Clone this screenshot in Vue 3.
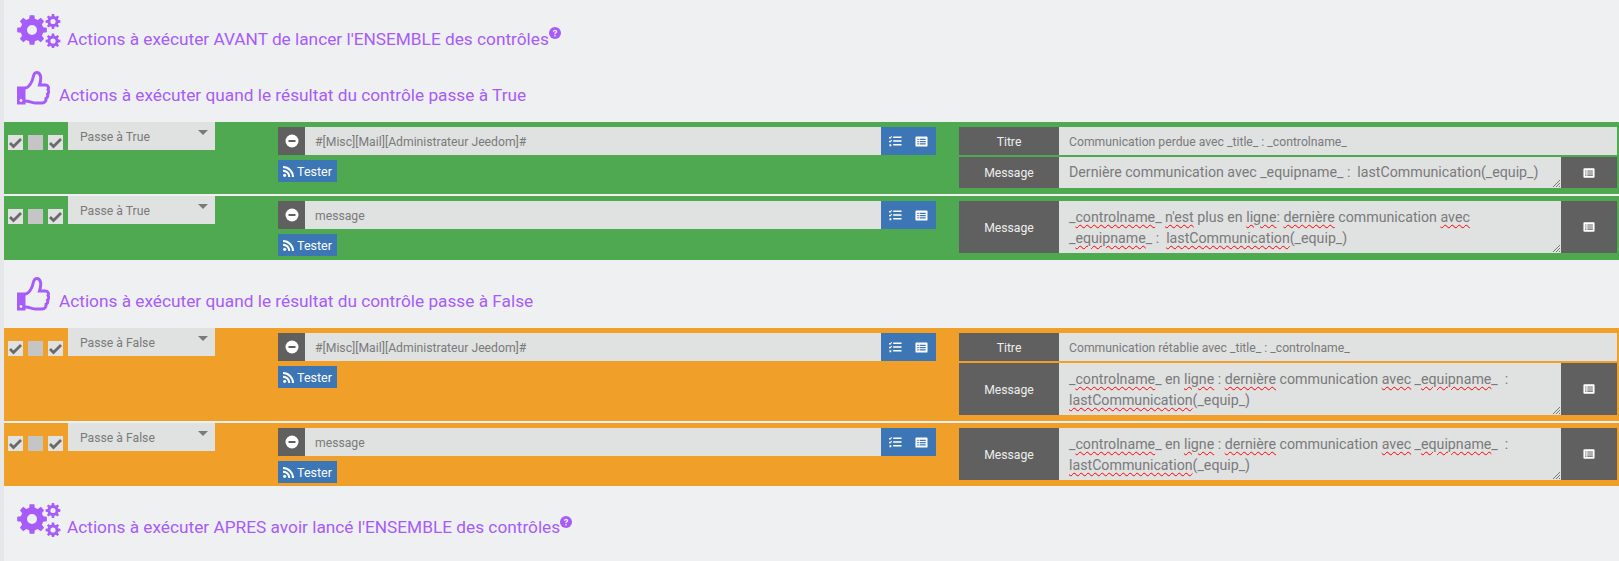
<template>
  <div class="page">
    <h4 class="heading gears">
      <svg class="ico-cogs" viewBox="0 0 44 34"><path :d="cogs" fill-rule="evenodd" /></svg>
      <span class="title">Actions à exécuter AVANT de lancer l'ENSEMBLE des contrôles</span>
      <svg class="ico-help" viewBox="0 0 12 12"><circle cx="6" cy="6" r="6" /><path d="M3.9 4.7C4 3.4 4.9 2.7 6.1 2.7c1.2 0 2.1.7 2.1 1.8 0 1.6-1.6 1.4-1.6 2.7H5.3c0-1.9 1.5-1.8 1.5-2.6 0-.4-.3-.7-.8-.7s-.8.3-.8.8zM5.3 8h1.3v1.4H5.3z" fill="#eff0f2" /></svg>
    </h4>

    <template v-for="group in groups" :key="group.label">
      <h4 class="heading thumb" :class="{ 'thumb-false': group.cls === 'orange' }">
        <svg class="ico-thumb" viewBox="0 0 33 35">
          <path d="M0 15.5h8.5v18H0z" />
          <path d="M8 17c2 0 5-2.5 7-7 1.5-3 1-8.500 4.500-8.500 4 0 5.500 4.500 3 12.500h6c3 0 3.500 3 2.500 4.500 1 1.500.8 3.500-.5 4.500.6 1.800 0 3.500-1.500 4.300.3 2.700-1 4.700-4 4.700h-6c-4 0-6-2-11-2" fill="none" stroke="#a65cff" stroke-width="3" />
          <circle cx="4" cy="29.500" r="1.400" fill="#eff0f2" />
        </svg>
        <span class="title">{{ group.label }}</span>
      </h4>

      <div v-for="(row, i) in group.rows" :key="i" class="row" :class="[group.cls, row.size]">
        <div class="checks">
          <span class="check"><svg viewBox="0 0 15 15"><path d="M2 8l3.500 3.500L13 4" /></svg></span>
          <span class="check off"></span>
          <span class="check"><svg viewBox="0 0 15 15"><path d="M2 8l3.500 3.500L13 4" /></svg></span>
        </div>
        <div class="select">{{ group.select }}<i class="caret"></i></div>

        <div class="cmd">
          <div class="input-group">
            <span class="minus"><svg viewBox="0 0 14 14"><circle cx="7" cy="7" r="6.500" fill="#fff" /><rect x="3.500" y="6" width="7" height="2" fill="#606060" /></svg></span>
            <span class="cmd-input">{{ row.cmd }}</span>
            <span class="blue-btns">
              <svg viewBox="0 0 14 14" class="ico-tasks"><path d="M0 2.500l1 1 2-2M0 6.500l1 1 2-2" fill="none" stroke="#fff" stroke-width="1.100" /><path d="M0.500 10h2v2h-2zM4.500 1.700h9v1.600h-9zM4.500 5.700h9v1.600h-9zM4.500 9.700h9v1.600h-9z" fill="#fff" /></svg>
              <svg viewBox="0 0 14 14" class="ico-list"><path d="M1.500 1.500h11a1 1 0 0 1 1 1v9a1 1 0 0 1-1 1h-11a1 1 0 0 1-1-1v-9a1 1 0 0 1 1-1z" fill="#fff" /><path d="M2.500 4h1.500v1.300H2.500zM5 4h6.500v1.300H5zM2.500 6.400h1.500v1.300H2.500zM5 6.400h6.500v1.300H5zM2.500 8.800h1.500v1.300H2.500zM5 8.800h6.500v1.300H5z" fill="#3c76b4" /></svg>
            </span>
          </div>
          <span class="tester">
            <svg viewBox="0 0 12 12"><circle cx="1.800" cy="10.200" r="1.700" /><path d="M0 4v2.200A5.800 5.800 0 0 1 5.800 12H8A8 8 0 0 0 0 4z" /><path d="M0 0v2.200A9.800 9.800 0 0 1 9.800 12H12A12 12 0 0 0 0 0z" /></svg>
            Tester
          </span>
        </div>

        <div class="options">
          <div v-if="row.titre" class="opt titre">
            <span class="opt-label">Titre</span>
            <span class="titre-text">{{ row.titre }}</span>
          </div>
          <div class="opt message">
            <span class="opt-label">Message</span>
            <div class="area" :class="{ 'area-large': row.large }">
              <div class="area-text"><template v-for="(part, k) in row.message" :key="k"><span v-if="part.bad" class="bad">{{ part.bad }}</span><template v-else>{{ part }}</template></template></div>
              <svg class="grip" viewBox="0 0 7 7"><path d="M0 7L7 0M3 7l4-4M6 7l1-1" stroke="#777" stroke-width="1" /></svg>
            </div>
            <span class="msg-btn"><svg viewBox="0 0 14 14"><path d="M1.500 1.500h11a1 1 0 0 1 1 1v9a1 1 0 0 1-1 1h-11a1 1 0 0 1-1-1v-9a1 1 0 0 1 1-1z" fill="#fff" /><path d="M2.500 4h1.500v1.300H2.500zM5 4h6.500v1.300H5zM2.500 6.400h1.500v1.300H2.500zM5 6.400h6.500v1.300H5zM2.500 8.800h1.500v1.300H2.500zM5 8.800h6.500v1.300H5z" fill="#606060" /></svg></span>
          </div>
        </div>
      </div>
    </template>

    <h4 class="heading gears last">
      <svg class="ico-cogs" viewBox="0 0 44 34"><path :d="cogs" fill-rule="evenodd" /></svg>
      <span class="title">Actions à exécuter APRES avoir lancé l'ENSEMBLE des contrôles</span>
      <svg class="ico-help" viewBox="0 0 12 12"><circle cx="6" cy="6" r="6" /><path d="M3.9 4.7C4 3.4 4.9 2.7 6.1 2.7c1.2 0 2.1.7 2.1 1.8 0 1.6-1.6 1.4-1.6 2.7H5.3c0-1.9 1.5-1.8 1.5-2.6 0-.4-.3-.7-.8-.7s-.8.3-.8.8zM5.3 8h1.3v1.4H5.3z" fill="#eff0f2" /></svg>
    </h4>
  </div>
</template>

<script setup>
// gear outline, drawn from its tooth count
const gear = (cx, cy, outer, root, hole, teeth) => {
  const step = (Math.PI * 2) / teeth;
  let d = '';
  for (let t = 0; t < teeth; t++) {
    const a = t * step - Math.PI / 2;
    const pts = [
      [root, a - step * 0.32],
      [outer, a - step * 0.2],
      [outer, a + step * 0.2],
      [root, a + step * 0.32],
    ];
    pts.forEach(([r, ang], idx) => {
      d += `${t === 0 && idx === 0 ? 'M' : 'L'}${(cx + r * Math.cos(ang)).toFixed(2)} ${(cy + r * Math.sin(ang)).toFixed(2)}`;
    });
  }
  d += 'Z';
  d += `M${cx + hole} ${cy}a${hole} ${hole} 0 1 0 ${-hole * 2} 0a${hole} ${hole} 0 1 0 ${hole * 2} 0Z`;
  return d;
};

const cogs = gear(15, 16, 15, 11.5, 5, 8) + gear(36, 7.5, 7.5, 5.6, 2.6, 8) + gear(36, 27, 7.5, 5.6, 2.6, 8);

const lineOne = ['_', { bad: 'controlname' }, '_ en ', { bad: 'ligne' }, ' : ', { bad: 'dernière' }, ' communication ', { bad: 'avec' }, ' _', { bad: 'equipname' }, '_  : ', { bad: 'lastCommunication' }, '(_equip_)'];

const groups = [
  {
    label: 'Actions à exécuter quand le résultat du contrôle passe à True',
    cls: 'green',
    select: 'Passe à True',
    rows: [
      {
        size: 'first',
        cmd: '#[Misc][Mail][Administrateur Jeedom]#',
        titre: 'Communication perdue avec _title_ : _controlname_',
        message: ['Dernière communication avec _equipname_ :  lastCommunication(_equip_)'],
      },
      {
        size: 'second',
        cmd: 'message',
        large: true,
        message: ['_', { bad: 'controlname' }, '_ ', { bad: "n'est" }, ' plus en ', { bad: 'ligne' }, ': ', { bad: 'dernière' }, ' communication ', { bad: 'avec' }, ' _', { bad: 'equipname' }, '_ :  ', { bad: 'lastCommunication' }, '(_equip_)'],
      },
    ],
  },
  {
    label: 'Actions à exécuter quand le résultat du contrôle passe à False',
    cls: 'orange',
    select: 'Passe à False',
    rows: [
      {
        size: 'first',
        cmd: '#[Misc][Mail][Administrateur Jeedom]#',
        titre: 'Communication rétablie avec _title_ : _controlname_',
        large: true,
        message: lineOne,
      },
      { size: 'second', cmd: 'message', large: true, message: lineOne },
    ],
  },
];
</script>

<style>
html,
body {
  margin: 0;
  background: #eff0f2;
}
</style>

<style scoped>
.page {
  height: 561px;
  overflow: hidden;
  box-sizing: border-box;
  border-left: 4px solid #e6e7e9;
  padding-top: 15px;
  font-family: Roboto, "Liberation Sans", sans-serif;
  color: #7a7a7a;
}

.heading {
  margin: 0;
  display: flex;
  align-items: flex-end;
  font-weight: 400;
  font-size: 17.25px;
  line-height: 20px;
  color: #a65cff;
}

.gears {
  padding-left: 13px;
  height: 33px;
}

.gears .title {
  padding-bottom: 0;
  margin-bottom: -1px;
}

.ico-cogs {
  width: 44px;
  height: 34px;
  fill: #a65cff;
  margin-right: 6px;
  flex: none;
}

.ico-help {
  width: 12px;
  height: 12px;
  fill: #a65cff;
  margin-bottom: 9px;
  flex: none;
}

.thumb {
  margin-top: 24px;
  padding-left: 13px;
  height: 34px;
  margin-bottom: 16px;
}

.thumb-false {
  margin-top: 18px;
}

.ico-thumb {
  width: 33px;
  height: 35px;
  fill: #a65cff;
  margin-right: 9px;
  flex: none;
}

.title {
  padding-bottom: 1px;
}

.row {
  display: flex;
  align-items: flex-start;
  margin-bottom: 2px;
  height: 64px;
  font-size: 12.2px;
}

.row.first {
  height: 72px;
}

.green {
  background: #4fa950;
}

.orange {
  background: #f09f28;
}

.orange.first {
  height: 93px;
}

.orange.second {
  height: 63px;
}

.checks {
  display: flex;
  gap: 5px;
  width: 60px;
  padding: 13px 0 0 4px;
  box-sizing: content-box;
  flex: none;
}

.check {
  width: 15px;
  height: 15px;
  background: #e0e1e1;
  display: block;
}

.check svg {
  display: block;
  fill: none;
  stroke: #6a6a6a;
  stroke-width: 2.800;
}

.check.off {
  background: #c5c5c5;
}

.select {
  position: relative;
  width: 147px;
  height: 28px;
  margin-left: 0;
  background: #e0e1e1;
  padding-left: 12px;
  box-sizing: border-box;
  line-height: 30px;
  flex: none;
}

.caret {
  position: absolute;
  right: 7px;
  top: 8px;
  border-left: 5px solid transparent;
  border-right: 5px solid transparent;
  border-top: 5px solid #7a7a7a;
}

.cmd {
  width: 658px;
  margin: 5px 0 0 63px;
  flex: none;
}

.input-group {
  display: flex;
  height: 28px;
}

.minus {
  width: 27px;
  background: #606060;
  display: flex;
  align-items: center;
  justify-content: center;
  flex: none;
}

.minus svg {
  width: 14px;
  height: 14px;
}

.cmd-input {
  flex: 1;
  background: #e0e1e1;
  padding-left: 10px;
  line-height: 30px;
}

.blue-btns {
  width: 55px;
  background: #3c76b4;
  display: flex;
  align-items: center;
  justify-content: space-between;
  padding: 0 8px 0 8px;
  box-sizing: border-box;
  flex: none;
}

.blue-btns svg {
  width: 13px;
  height: 13px;
}

.tester {
  margin-top: 5px;
  width: 59px;
  height: 22px;
  background: #3c76b4;
  color: #fff;
  display: flex;
  align-items: center;
  justify-content: center;
  gap: 3px;
  font-size: 12.5px;
}

.tester svg {
  width: 11px;
  height: 11px;
  fill: #fff;
}

.options {
  flex: 1;
  margin: 5px 2px 0 23px;
}

.opt {
  display: flex;
}

.titre {
  height: 28px;
  margin-bottom: 2px;
}

.opt-label {
  width: 100px;
  background: #606060;
  color: #eee;
  display: flex;
  align-items: center;
  justify-content: center;
  padding-top: 1px;
  box-sizing: border-box;
  flex: none;
}

.titre-text {
  flex: 1;
  background: #e0e1e1;
  padding-left: 10px;
  line-height: 30px;
  font-size: 12.2px;
}

.area {
  position: relative;
  flex: 1;
  height: 31px;
  background: #e0e1e1;
  box-sizing: border-box;
  padding: 5px 10px 0;
  font-size: 14.2px;
  line-height: 21px;
  white-space: pre-wrap;
}

.area-large {
  height: 52px;
  padding-top: 6px;
}

.bad {
  text-decoration: underline wavy #f00 1.2px;
  text-underline-offset: 2px;
}

.grip {
  position: absolute;
  right: 1px;
  bottom: 1px;
  width: 7px;
  height: 7px;
}

.msg-btn {
  width: 56px;
  background: #606060;
  display: flex;
  align-items: center;
  justify-content: center;
  flex: none;
}

.msg-btn svg {
  width: 12px;
  height: 12px;
}

.last {
  margin-top: 18px;
}

.last .title {
  margin-bottom: 0;
}
</style>
